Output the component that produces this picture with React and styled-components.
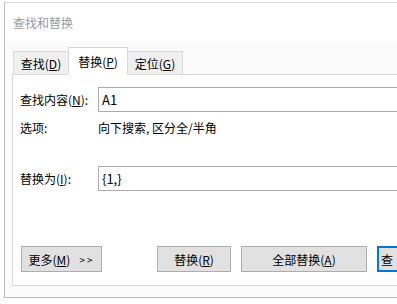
import React from 'react'
import styled, { createGlobalStyle } from 'styled-components'

const GlobalStyle = createGlobalStyle`
  html, body {
    margin: 0;
    padding: 0;
    background: #ffffff;
    overflow: hidden;
  }
  body {
    font-family: "Noto Sans CJK SC", "Noto Sans", sans-serif;
    font-size: 12px;
    color: #000;
  }
`

const Window = styled.div`
  margin: 2px 0 0 4px;
  width: 430px;
  height: 294px;
  border-top: 1px solid #d6d6d6;
  border-left: 1px solid #bdbdbd;
  border-bottom: 1px solid #bdbdbd;
  background: #f6f6f6;
  display: flex;
  flex-direction: column;
`

const TitleBar = styled.div`
  height: 38px;
  display: flex;
  align-items: center;
  padding-left: 8px;
  background: #ffffff;
  color: #9a9a9a;
  font-size: 12px;
`

const Body = styled.div`
  flex: 1;
  display: flex;
  flex-direction: column;
  padding: 5px 0 11px 7px;
  background: #fbfbfb;
`

const Tabs = styled.div`
  display: flex;
  align-items: flex-end;
  height: 28px;
  padding-left: 1px;
  position: relative;
  z-index: 1;
`

const Tab = styled.div`
  height: ${p => (p.$active ? '28px' : '23px')};
  width: ${p => (p.$active ? '60px' : '56px')};
  box-sizing: border-box;
  display: flex;
  align-items: center;
  justify-content: center;
  border: 1px solid #d9d9d9;
  border-bottom: ${p => (p.$active ? '1px solid #ffffff' : 'none')};
  background: ${p => (p.$active ? '#ffffff' : '#f0f0f0')};
  margin-bottom: ${p => (p.$active ? '-1px' : '0')};
  margin-left: ${p => (p.$active ? '-1px' : '0')};
  margin-right: ${p => (p.$active ? '-1px' : '0')};
  padding-top: ${p => (p.$active ? '0' : '1px')};
`

const Panel = styled.div`
  flex: 1;
  border: 1px solid #d9d9d9;
  background: #ffffff;
  padding: 12px 0 13px 7px;
  display: flex;
  flex-direction: column;
`

const Row = styled.div`
  display: flex;
  align-items: center;
  margin-top: ${p => p.$top || 0}px;
  height: ${p => p.$height || 25}px;
`

const Label = styled.div`
  width: 78px;
  flex-shrink: 0;
`

const Field = styled.div`
  width: 320px;
  height: 25px;
  box-sizing: border-box;
  border: 1px solid #ababab;
  display: flex;
  align-items: center;
  padding-left: 3px;
  font-size: 13px;
`

const Spacer = styled.div`
  flex: 1;
`

const ButtonRow = styled.div`
  display: flex;
  align-items: center;
  padding-left: 1px;
`

const Button = styled.div`
  width: ${p => p.$w}px;
  height: 26px;
  box-sizing: border-box;
  flex-shrink: 0;
  margin-left: ${p => p.$gap || 0}px;
  border: ${p => (p.$focus ? '2px solid #0078d7' : '1px solid #adadad')};
  background: #e1e1e1;
  display: flex;
  align-items: center;
  justify-content: ${p => (p.$focus ? 'flex-start' : 'center')};
  padding-left: ${p => (p.$focus ? '2px' : '0')};
  white-space: nowrap;
`

const More = styled.span`
  font-size: 10px;
  letter-spacing: 2px;
  margin-left: 9px;
`

export default function App() {
  return (
    <>
      <GlobalStyle />
      <Window>
        <TitleBar>查找和替换</TitleBar>
        <Body>
          <Tabs>
            <Tab>查找(<u>D</u>)</Tab>
            <Tab $active>替换(<u>P</u>)</Tab>
            <Tab>定位(<u>G</u>)</Tab>
          </Tabs>
          <Panel>
            <Row>
              <Label>查找内容(<u>N</u>):</Label>
              <Field>A1</Field>
            </Row>
            <Row $top={7} $height={16}>
              <Label>选项:</Label>
              <span>向下搜索, 区分全/半角</span>
            </Row>
            <Row $top={31}>
              <Label>替换为(<u>I</u>):</Label>
              <Field>{'{1,}'}</Field>
            </Row>
            <Spacer />
            <ButtonRow>
              <Button $w={81}>
                更多(<u>M</u>)<More>&gt;&gt;</More>
              </Button>
              <Button $w={74} $gap={55}>替换(<u>R</u>)</Button>
              <Button $w={126} $gap={10}>全部替换(<u>A</u>)</Button>
              <Button $w={40} $gap={10} $focus>查</Button>
            </ButtonRow>
          </Panel>
        </Body>
      </Window>
    </>
  )
}
